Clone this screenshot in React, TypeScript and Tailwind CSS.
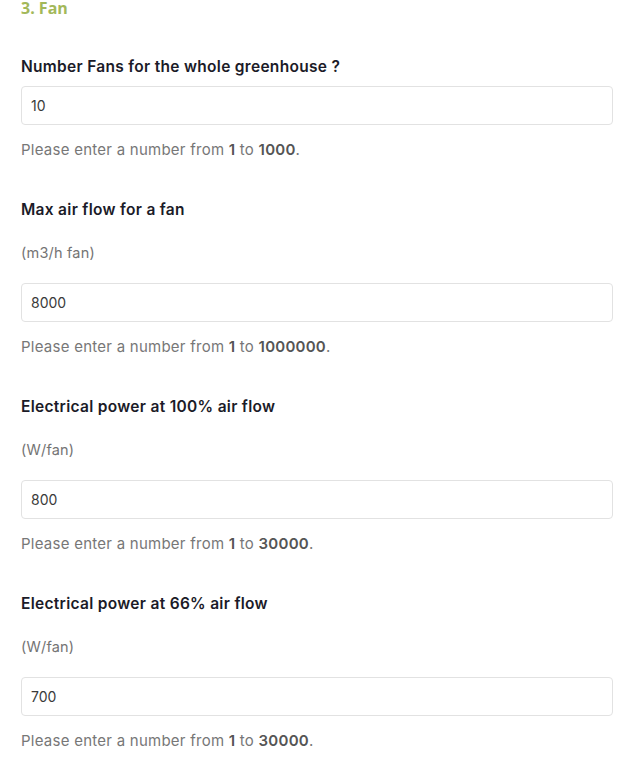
import { ReactNode } from 'react'

interface FieldProps {
  label: string
  unit?: string
  value: string
  min: string
  max: string
}

const body = { fontFamily: 'Inter, "Open Sans", sans-serif' }
const heading = { fontFamily: '"Open Sans", "Liberation Sans", sans-serif' }

function Field({ label, unit, value, min, max }: FieldProps) {
  return (
    <div className="flex flex-col">
      <label className="text-[15.5px] leading-[20px] font-semibold tracking-[0.3px] text-[#1b1b28]">{label}</label>
      {unit && <p className="mt-[23px] text-[14.5px] leading-[20px] tracking-[0.2px] text-[#747474]">{unit}</p>}
      <input
        defaultValue={value}
        className={`${unit ? 'mt-[20px]' : 'mt-[9px]'} h-[39px] w-full rounded-[4px] border border-[#e2e2e2] bg-white px-[9px] text-[14px] text-[#3a3a3a] outline-none`}
      />
      <p className="mt-[15px] text-[15px] leading-[20px] tracking-[0.25px] text-[#777777]">
        Please enter a number from <b className="font-semibold text-[#555555]">{min}</b> to{' '}
        <b className="font-semibold text-[#555555]">{max}</b>.
      </p>
    </div>
  )
}

function Section({ children }: { children: ReactNode }) {
  return <div className="flex flex-col gap-[40px]">{children}</div>
}

export default function App() {
  return (
    <div className="min-h-[766px] w-[628px] bg-white pl-[21px] pr-[15px]" style={body}>
      <h2 className="pt-[1px] text-[16px] leading-[15px] font-bold text-[#a3b85a]" style={heading}>
        3. Fan
      </h2>
      <div className="mt-[41px]">
        <Section>
          <Field label="Number Fans for the whole greenhouse ?" value="10" min="1" max="1000" />
          <Field label="Max air flow for a fan" unit="(m3/h fan)" value="8000" min="1" max="1000000" />
          <Field label="Electrical power at 100% air flow" unit="(W/fan)" value="800" min="1" max="30000" />
          <Field label="Electrical power at 66% air flow" unit="(W/fan)" value="700" min="1" max="30000" />
        </Section>
      </div>
    </div>
  )
}
